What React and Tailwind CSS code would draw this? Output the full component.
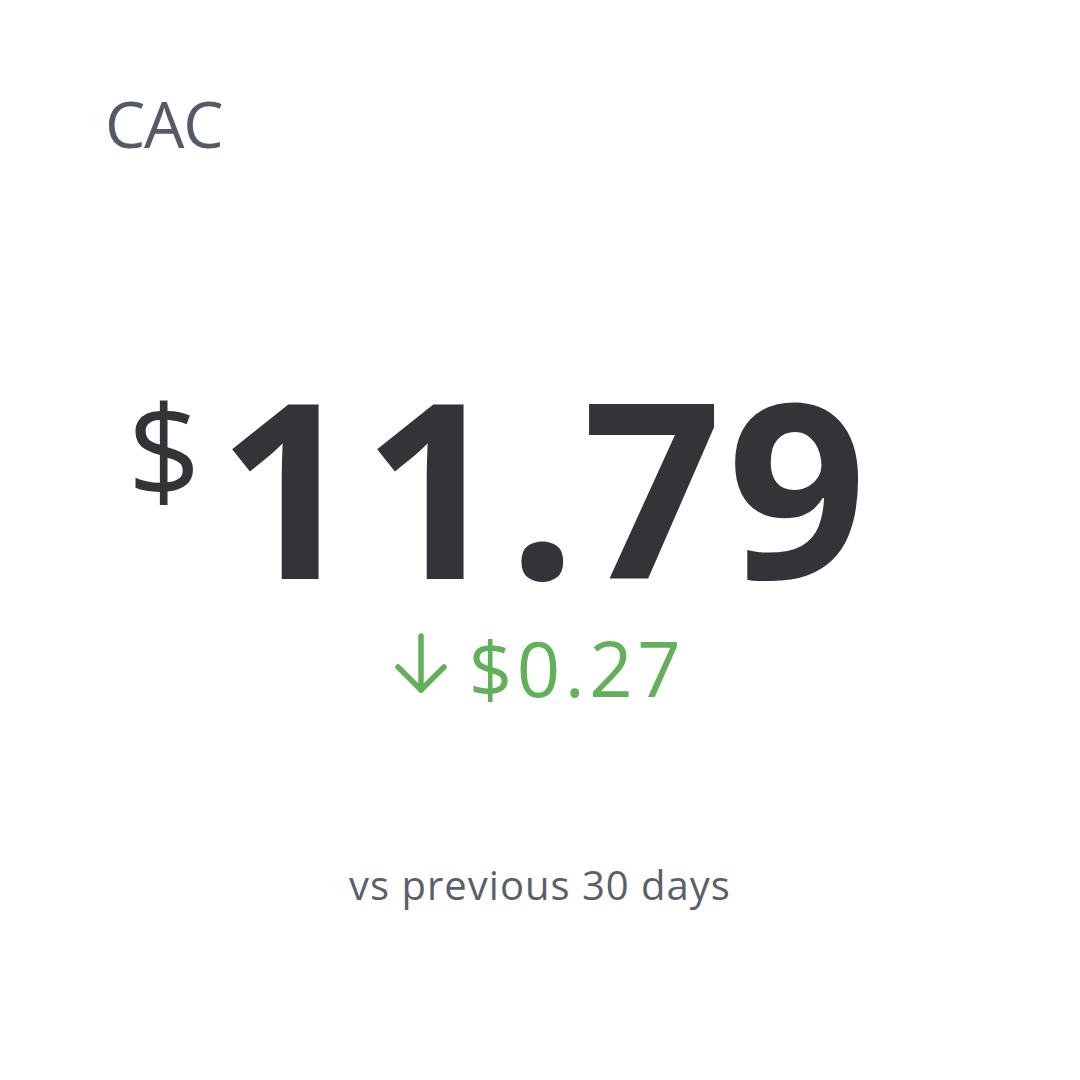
import React from "react";

export default function App() {
  return (
    <div
      className="w-[1080px] h-[1080px] bg-white flex flex-col"
      style={{ fontFamily: '"Open Sans", "Noto Sans", sans-serif' }}
    >
      <div className="pt-[92px] pl-[105px] text-[64px] leading-none text-[#565a66] tracking-[-0.02em]">
        CAC
      </div>
      <div className="mt-[206px] flex justify-center">
        <div className="relative ml-[6px] pl-[4px]">
          <span className="absolute right-full top-[23px] mr-[13px] text-[128px] leading-none text-[#333438]">
            $
          </span>
          <span className="text-[244px] leading-none font-bold text-[#333438] tracking-[0.022em]">
            11.79
          </span>
        </div>
      </div>
      <div className="mt-[24px] flex justify-center items-start gap-[22px] text-[#62b05a]">
        <svg className="mt-[3px]" width="52" height="60" viewBox="0 0 52 60" fill="none" stroke="currentColor" strokeWidth="5.5" strokeLinecap="round" strokeLinejoin="round">
          <path d="M26 3 V57" />
          <path d="M3 34 L26 57 L49 34" />
        </svg>
        <span className="text-[76px] leading-none tracking-[0.06em]">$0.27</span>
      </div>
      <div className="mt-[159px] text-center text-[40px] leading-none text-[#5b5f6b] tracking-[0.025em]">
        vs previous 30 days
      </div>
    </div>
  );
}
